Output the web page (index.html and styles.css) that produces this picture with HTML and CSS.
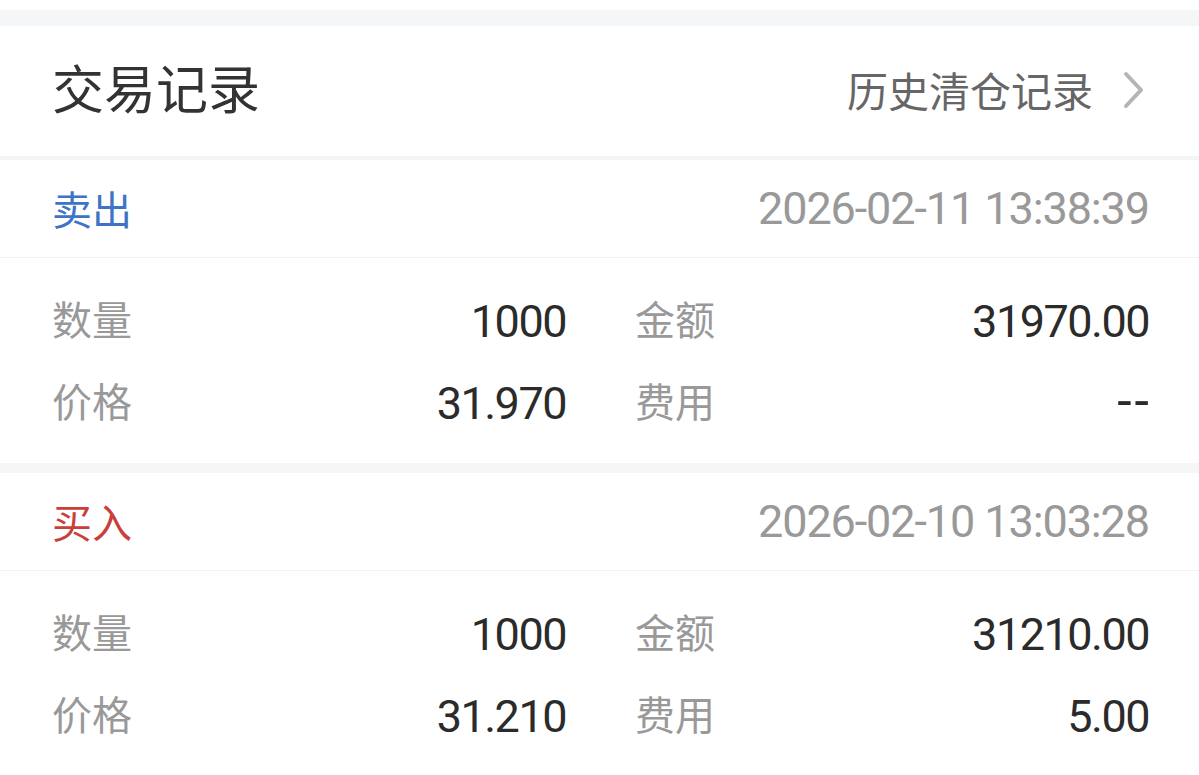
FILE: index.html
```html
<!DOCTYPE html>
<html lang="zh-CN">
<head>
<meta charset="utf-8">
<title>交易记录</title>
<link rel="stylesheet" href="styles.css">
</head>
<body>
<div class="page">
  <div class="top-gap"></div>
  <div class="band band-top"></div>
  <header class="section-head">
    <h1 class="title">交易记录</h1>
    <a class="history" href="#">历史清仓记录
      <svg class="chev" width="22" height="38" viewBox="0 0 22 38" aria-hidden="true"><path d="M3 3 L18 19 L3 35" fill="none" stroke="#b5b5b5" stroke-width="4" stroke-linecap="round" stroke-linejoin="round"/></svg>
    </a>
  </header>
  <div class="band band-thin"></div>

  <section class="trade">
    <div class="trade-head">
      <span class="side sell">卖出</span>
      <span class="time">2026-02-11 13:38:39</span>
    </div>
    <div class="trade-body">
      <div class="cell"><span class="label">数量</span><span class="val">1000</span></div>
      <div class="cell"><span class="label">金额</span><span class="val">31970.00</span></div>
      <div class="cell"><span class="label">价格</span><span class="val">31.970</span></div>
      <div class="cell"><span class="label">费用</span><span class="val dash">--</span></div>
    </div>
  </section>
  <div class="band band-mid"></div>

  <section class="trade">
    <div class="trade-head">
      <span class="side buy">买入</span>
      <span class="time">2026-02-10 13:03:28</span>
    </div>
    <div class="trade-body">
      <div class="cell"><span class="label">数量</span><span class="val">1000</span></div>
      <div class="cell"><span class="label">金额</span><span class="val">31210.00</span></div>
      <div class="cell"><span class="label">价格</span><span class="val">31.210</span></div>
      <div class="cell"><span class="label">费用</span><span class="val">5.00</span></div>
    </div>
  </section>
</div>
</body>
</html>
```

FILE: styles.css
```css
* { box-sizing: border-box; margin: 0; padding: 0; }
html, body { background: #ffffff; }
body {
  font-family: "Noto Sans CJK SC", "Noto Sans", sans-serif;
  color: #333;
  overflow: hidden;
}
.page { width: 1199px; }
.top-gap { height: 10px; background: #ffffff; }
.band { background: #f5f6f8; }
.band-top { height: 16px; }
.band-thin { height: 4px; background: #f4f6f6; }
.band-mid { height: 10px; }

.section-head {
  height: 130px;
  display: flex;
  align-items: center;
  justify-content: space-between;
  padding: 0 54px 0 52px;
}
.title {
  font-size: 52px;
  font-weight: 400;
  color: #333333;
  line-height: 1;
  padding-bottom: 9px;
}
.history {
  display: flex;
  align-items: center;
  gap: 30px;
  font-size: 41px;
  color: #666666;
  text-decoration: none;
  line-height: 1;
  padding-bottom: 3px;
}
.chev { display: block; }

.trade-head {
  height: 98px;
  display: flex;
  align-items: center;
  justify-content: space-between;
  padding: 0 50px 0 52px;
  border-bottom: 1px solid #f2f2f2;
}
.side { font-size: 40px; line-height: 1; padding-bottom: 2px; }
.sell { color: #3e74c6; }
.buy { color: #c8403a; }
.time {
  font-family: Roboto, "Noto Sans", sans-serif;
  font-size: 45px;
  letter-spacing: -1.1px;
  color: #999999;
  line-height: 1;
}

.trade-body {
  display: grid;
  grid-template-columns: 1fr 1fr;
  column-gap: 69px;
  grid-auto-rows: 82px;
  padding: 22px 50px 19px 52px;
}
.cell {
  display: flex;
  align-items: center;
  justify-content: space-between;
}
.label {
  font-size: 40px;
  color: #999999;
  line-height: 1;
  padding-bottom: 6px;
}
.val {
  font-family: Roboto, "Noto Sans", sans-serif;
  font-size: 45px;
  letter-spacing: -1.5px;
  color: #2b2b2b;
  line-height: 1;
}
.val.dash { font-size: 52px; letter-spacing: 3px; margin-right: -3px; padding-bottom: 2px; }
```
